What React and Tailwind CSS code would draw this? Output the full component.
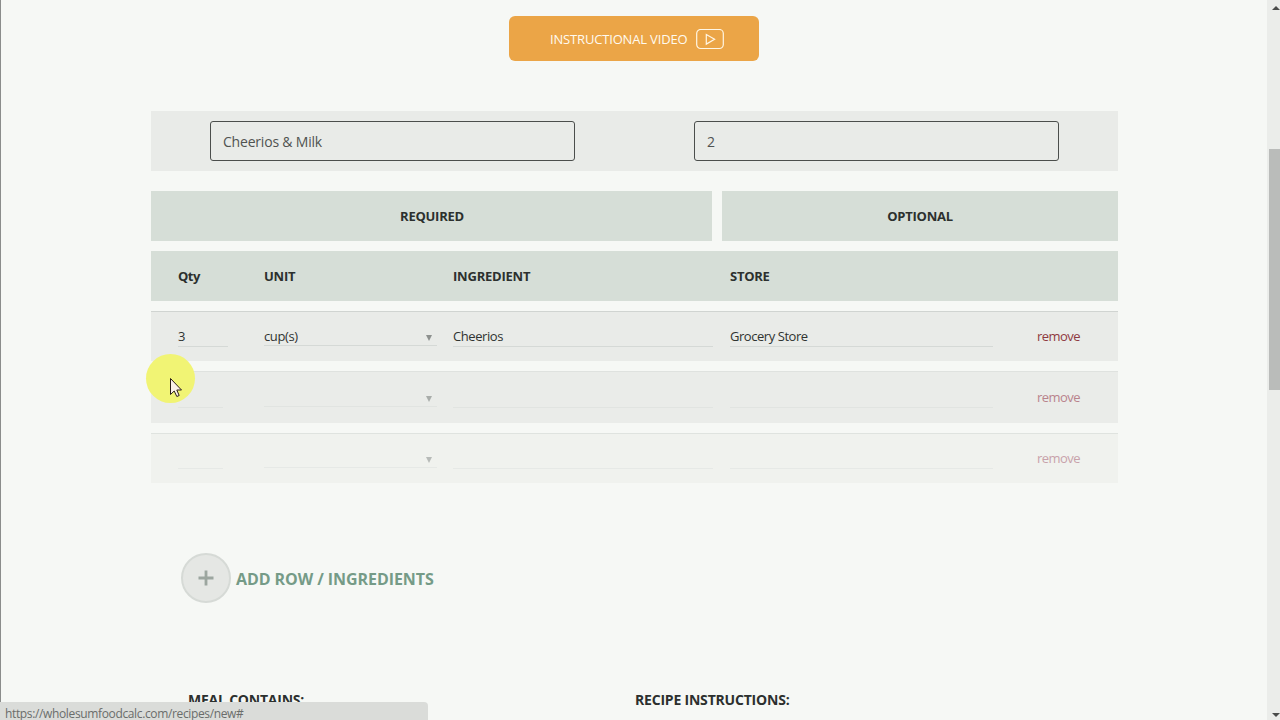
const rows = [
  {
    qty: "3", unit: "cup(s)", ingredient: "Cheerios", store: "Grocery Store",
    box: "h-[50px] bg-[#e9ebe8] border-[#d0d4d1]",
    line: "border-[#d5d9d6]", qtyLine: "w-[50px]", arrow: "text-[#8d918e]", remove: "text-[#8f3a41]", shift: "pt-0",
  },
  {
    qty: "", unit: "", ingredient: "", store: "",
    box: "mt-[10px] h-[52px] bg-[#eaece9] border-[#dfe2df]",
    line: "border-[#e1e4e1]", qtyLine: "w-[45px]", arrow: "text-[#a9adaa]", remove: "text-[#b9838c]", shift: "pt-px",
  },
  {
    qty: "", unit: "", ingredient: "", store: "",
    box: "mt-[10px] h-[50px] bg-[#f0f2ee] border-[#dfe3df]",
    line: "border-[#e6e9e6]", qtyLine: "w-[45px]", arrow: "text-[#b7bbb8]", remove: "text-[#c8a2aa]", shift: "pt-0",
  },
];

function Field({ value, className }) {
  return <div className={`h-[20px] border-b leading-[18px] ${className}`}>{value}</div>;
}

function IngredientRow({ row }) {
  return (
    <div className={`flex border-t pl-[27px] text-[13px] text-[#303331] ${row.box}`}>
      <div className={`flex w-full ${row.shift}`}>
        <div className="w-[86px] pt-[15px]">
          <Field value={row.qty} className={`${row.line} ${row.qtyLine}`} />
        </div>
        <div className="w-[189px] pt-[15px]">
          <div className={`flex h-[19px] w-[173px] justify-between border-b leading-[18px] tracking-[-0.4px] ${row.line}`}>
            <span>{row.unit}</span>
            <svg viewBox="0 0 6 6" className={`mr-[5px] mt-[8px] h-[6px] w-[6px] ${row.arrow}`}>
              <path d="M0 0H6L3 6Z" fill="currentColor" />
            </svg>
          </div>
        </div>
        <div className="w-[277px] pt-[15px]">
          <Field value={row.ingredient} className={`w-[260px] tracking-[-0.42px] ${row.line}`} />
        </div>
        <div className="w-[307px] pt-[15px]">
          <Field value={row.store} className={`w-[263px] tracking-[-0.45px] ${row.line}`} />
        </div>
        <a className={`pt-[15px] leading-[18px] tracking-[-0.55px] ${row.remove}`}>remove</a>
      </div>
    </div>
  );
}

function ScrollBar() {
  return (
    <div className="flex h-full w-[13px] shrink-0 flex-col items-end bg-[#ebedea]">
      <svg viewBox="0 0 8 4" className="mt-[6px] h-[4px] w-[8px]">
        <path d="M4 0L8 4H0Z" fill="#4a4c4a" />
      </svg>
      <div className="mt-[139px] h-[241px] w-[11px] bg-[#babcba]" />
      <svg viewBox="0 0 8 4" className="mb-[3px] mt-auto h-[4px] w-[8px]">
        <path d="M4 4L8 0H0Z" fill="#4a4c4a" />
      </svg>
    </div>
  );
}

export default function App() {
  return (
    <div className="relative flex h-[720px] w-[1280px] overflow-hidden bg-[#f6f8f5] font-['Open_Sans','Noto_Sans',sans-serif] text-[#2c302e]">
      <div className="h-full w-px shrink-0 bg-[#8b8d8b]" />
      <main className="h-full w-[1266px] pl-[150px] pt-4">
        <div className="w-[967px]">
          <button className="ml-[358px] flex h-[45px] w-[250px] items-center rounded-[6px] bg-[#eba547] pl-[41px] pt-[2px] text-[13px] text-[#fffaf0]">
            <span className="w-[146px] whitespace-nowrap text-left font-medium tracking-[-0.17px]">INSTRUCTIONAL VIDEO</span>
            <svg viewBox="0 0 28 21" className="h-[21px] w-[28px]" fill="none" stroke="#fff6e4" strokeWidth="1.2">
              <rect x="0.7" y="0.5" width="26.6" height="19" rx="4" />
              <path d="M10.3 5.5V15.1L18.6 10.3Z" />
            </svg>
          </button>

          <section className="mt-[50px] flex h-[60px] items-center bg-[#e9ebe8] pl-[59px] text-[14px] text-[#505351]">
            <div className="mr-[119px] flex h-[40px] w-[365px] items-center rounded-[3px] border border-[#4b4e4c] pl-[12px] pt-px tracking-[-0.2px]">Cheerios &amp; Milk</div>
            <div className="flex h-[40px] w-[365px] items-center rounded-[3px] border border-[#4b4e4c] pl-[12px] pt-px">2</div>
          </section>

          <section className="mt-[20px] flex gap-[10px] text-[13px] font-bold tracking-[-0.25px]">
            <div className="flex h-[50px] w-[561px] items-center justify-center bg-[#d6ded7] pl-px pt-[2px]">REQUIRED</div>
            <div className="flex h-[50px] w-[396px] items-center justify-center bg-[#d6ded7] pt-[2px]">OPTIONAL</div>
          </section>

          <section className="mb-[10px] mt-[10px] flex h-[50px] items-center bg-[#d6ded7] pl-[27px] pt-[2px] text-[13px] font-bold">
            <span className="w-[86px] tracking-[-0.5px]">Qty</span>
            <span className="w-[189px] tracking-[-0.25px]">UNIT</span>
            <span className="w-[277px] tracking-[-0.22px]">INGREDIENT</span>
            <span className="tracking-[-0.25px]">STORE</span>
          </section>

          {rows.map((row, i) => <IngredientRow key={i} row={row} />)}

          <div className="mt-[70px] flex h-[50px] items-center pl-[30px]">
            <div className="flex h-[50px] w-[50px] items-center justify-center rounded-full border-2 border-[#d6dad6] bg-[#e5e7e4]">
              <svg viewBox="0 0 16 16" className="h-[16px] w-[16px]">
                <path d="M8 0.5V15.5M0.5 8H15.5" stroke="#9ca69f" strokeWidth="2.8" />
              </svg>
            </div>
            <span className="ml-[5px] pt-px text-[16px] font-bold tracking-[-0.07px] text-[#759b87]">ADD ROW / INGREDIENTS</span>
          </div>

          <div className="mt-[87px] flex pl-[37px] text-[14px] font-bold leading-[20px]">
            <span className="w-[447px] tracking-[-0.22px]">MEAL CONTAINS:</span>
            <span className="tracking-[-0.2px]">RECIPE INSTRUCTIONS:</span>
          </div>
        </div>
      </main>
      <ScrollBar />

      <div className="absolute bottom-0 left-0 h-[18px] w-[428px] rounded-tr-[4px] bg-[#dadcd9] pl-[5px] pt-[3px] text-[12px] leading-[18px] tracking-[-0.36px] text-[#6a6d6b]">
        https://wholesumfoodcalc.com/recipes/new#
      </div>
      <div className="absolute left-[146px] top-[354px] size-[49px] rounded-full bg-[#f1f474]" />
      <svg viewBox="0 0 13 20" className="absolute left-[170px] top-[378px] h-[20px] w-[13px]">
        <path d="M0.5 0.5V16.5L4.2 13L6.8 18.5L9.2 17.5L6.8 12H11.5Z" fill="#fbf1e8" stroke="#2b1d18" />
      </svg>
    </div>
  );
}
